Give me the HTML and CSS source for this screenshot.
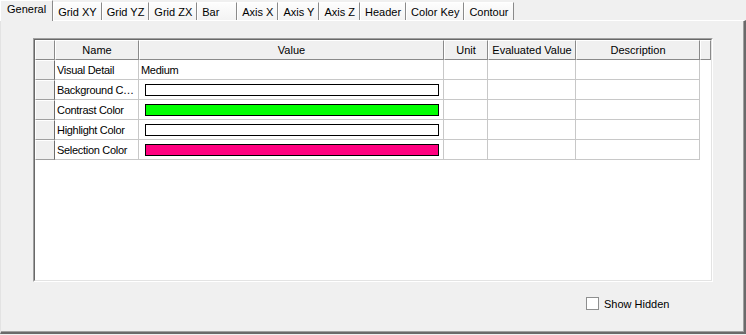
FILE: index.html
```html
<!DOCTYPE html>
<html lang="en">
<head>
    <meta charset="UTF-8">
    <title>Plot Properties</title>
    <link rel="stylesheet" href="styles.css">
</head>
<body>
    <div class="tabs">
        <div class="tab active">General</div>
        <div class="tab">Grid XY</div>
        <div class="tab">Grid YZ</div>
        <div class="tab">Grid ZX</div>
        <div class="tab">Bar</div>
        <div class="tab">Axis X</div>
        <div class="tab">Axis Y</div>
        <div class="tab">Axis Z</div>
        <div class="tab">Header</div>
        <div class="tab">Color Key</div>
        <div class="tab">Contour</div>
    </div>
    <div class="page">
        <div class="grid">
            <div class="grid-inner">
                <table class="props">
                    <thead>
                        <tr>
                            <th class="col-rowhead"></th>
                            <th class="col-name">Name</th>
                            <th class="col-value">Value</th>
                            <th class="col-unit">Unit</th>
                            <th class="col-eval">Evaluated Value</th>
                            <th class="col-desc">Description</th>
                            <th class="col-filler"></th>
                        </tr>
                    </thead>
                    <tbody>
                        <tr>
                            <td class="rowhead"></td>
                            <td>Visual Detail</td>
                            <td>Medium</td>
                            <td></td>
                            <td></td>
                            <td></td>
                            <td class="filler"></td>
                        </tr>
                        <tr>
                            <td class="rowhead"></td>
                            <td>Background Color</td>
                            <td class="swatch-cell"><span class="swatch white"></span></td>
                            <td></td>
                            <td></td>
                            <td></td>
                            <td class="filler"></td>
                        </tr>
                        <tr>
                            <td class="rowhead"></td>
                            <td>Contrast Color</td>
                            <td class="swatch-cell"><span class="swatch green"></span></td>
                            <td></td>
                            <td></td>
                            <td></td>
                            <td class="filler"></td>
                        </tr>
                        <tr>
                            <td class="rowhead"></td>
                            <td>Highlight Color</td>
                            <td class="swatch-cell"><span class="swatch white"></span></td>
                            <td></td>
                            <td></td>
                            <td></td>
                            <td class="filler"></td>
                        </tr>
                        <tr>
                            <td class="rowhead"></td>
                            <td>Selection Color</td>
                            <td class="swatch-cell"><span class="swatch pink"></span></td>
                            <td></td>
                            <td></td>
                            <td></td>
                            <td class="filler"></td>
                        </tr>
                    </tbody>
                </table>
            </div>
        </div>
        <label class="options">
            <span class="check"></span>
            Show Hidden
        </label>
    </div>
</body>
</html>
```

FILE: styles.css
```css
body {
    margin: 0;
    width: 746px;
    height: 335px;
    overflow: hidden;
    background: #f0f0f0;
    font-family: 'Liberation Sans', Arial, sans-serif;
    font-size: 11px;
    color: #000000;
}
.tabs {
    display: flex;
    align-items: flex-end;
    height: 20px;
    position: relative;
    z-index: 1;
}
.tab {
    box-sizing: border-box;
    height: 18px;
    min-width: 40px;
    padding: 3px 4px 0 4px;
    border-top: 1px solid #ffffff;
    border-left: 1px solid #ffffff;
    border-right: 1px solid #8a8a8a;
    background: linear-gradient(#fdfdfd, #f3f3f3);
    white-space: nowrap;
}
.tab.active {
    height: 21px;
    margin-bottom: -1px;
    padding: 2px 6px 0 6px;
    background: #f0f0f0;
}
.page {
    box-sizing: border-box;
    height: 314px;
    padding: 17px 0 0 32px;
    border-top: 1px solid #ffffff;
    border-left: 1px solid #e3e3e3;
    border-right: 2px solid #6a6a6a;
    border-bottom: 2px solid #6a6a6a;
    box-shadow: inset -1px -1px 0 #a0a0a0;
}
.grid {
    box-sizing: border-box;
    width: 680px;
    height: 244px;
    border: 1px solid;
    border-color: #a0a0a0 #ffffff #ffffff #a0a0a0;
}
.grid-inner {
    box-sizing: border-box;
    height: 100%;
    background: #ffffff;
    border: 1px solid;
    border-color: #696969 #e3e3e3 #e3e3e3 #696969;
}
.props {
    table-layout: fixed;
    border-collapse: separate;
    border-spacing: 0;
    width: 676px;
}
.props th,
.props td {
    box-sizing: border-box;
    height: 20px;
    padding: 0 2px;
    white-space: nowrap;
    overflow: hidden;
    text-overflow: ellipsis;
    font-weight: normal;
}
.props th {
    background: #f0f0f0;
    text-align: center;
    border-top: 1px solid #ffffff;
    border-left: 1px solid #ffffff;
    border-right: 1px solid #8a8a8a;
    border-bottom: 1px solid #8a8a8a;
}
.col-rowhead { width: 20px; }
.col-name { width: 84px; }
.col-value { width: 305px; }
.col-unit { width: 44px; }
.col-eval { width: 88px; }
.col-desc { width: 124px; }
.col-filler { width: 11px; }
.props td {
    letter-spacing: -0.3px;
    border-right: 1px solid #c8c8c8;
    border-bottom: 1px solid #c8c8c8;
}
.props td.rowhead {
    background: #f0f0f0;
    border-top: 1px solid #ffffff;
    border-left: 1px solid #ffffff;
    border-right: 1px solid #6d6d6d;
    border-bottom: 1px solid #a0a0a0;
}
.props td.filler {
    border: none;
}
.props td.swatch-cell {
    padding: 0 4px 0 6px;
}
.swatch {
    display: block;
    box-sizing: border-box;
    height: 12px;
    border: 1px solid #000000;
}
.swatch.white { background: #ffffff; }
.swatch.green { background: #00ff00; }
.swatch.pink { background: #ff0080; }
.options {
    display: flex;
    align-items: center;
    gap: 5px;
    height: 13px;
    margin: 15px 0 0 553px;
}
.check {
    box-sizing: border-box;
    width: 13px;
    height: 13px;
    border: 1px solid #8e8f8f;
    background: #ffffff;
}
```
